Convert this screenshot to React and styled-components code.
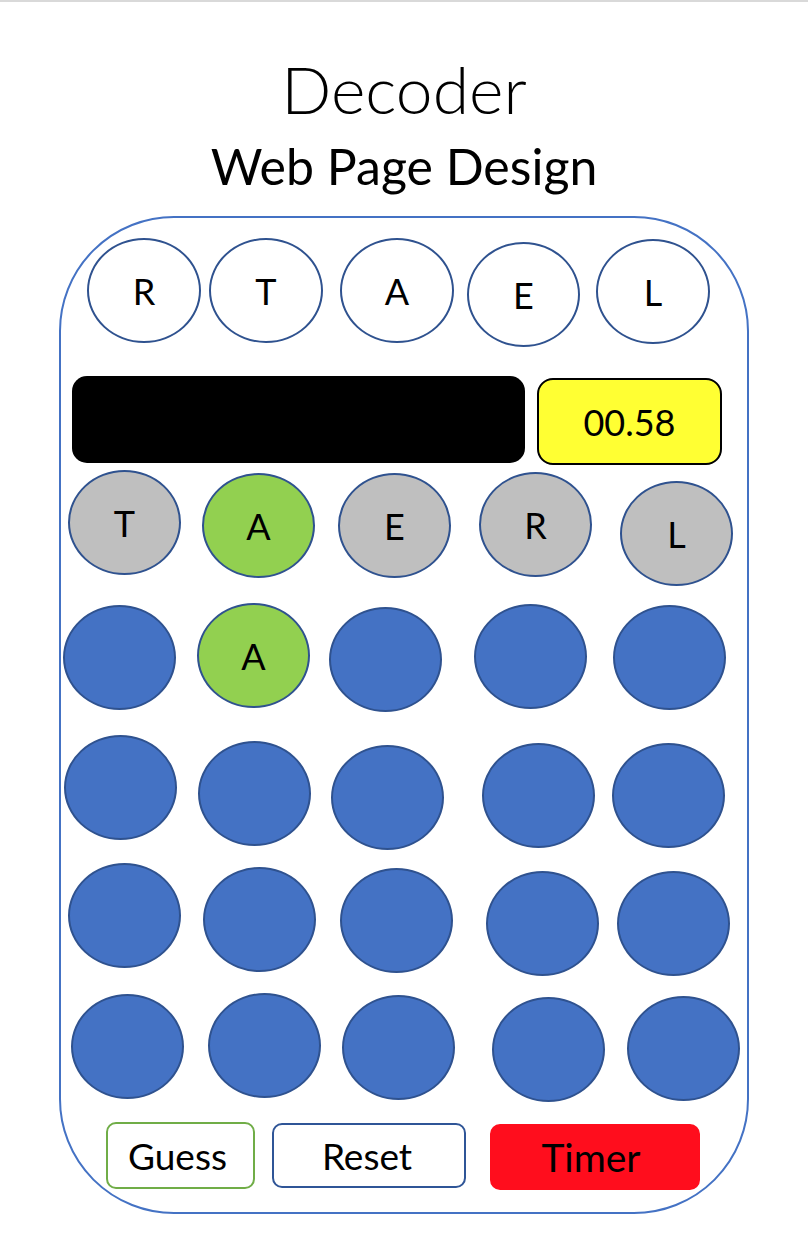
import styled, { createGlobalStyle } from "styled-components";

const GlobalStyle = createGlobalStyle`
  html, body {
    margin: 0;
    padding: 0;
    background: #ffffff;
  }
  body {
    border-top: 2px solid #d9d9d9;
    font-family: Lato, "Open Sans", sans-serif;
    color: #000;
  }
`;

const colors = {
  frame: "#4472c4",
  ring: "#2f528f",
  blank: "#ffffff",
  miss: "#bfbfbf",
  hit: "#92d050",
  slot: "#4472c4",
};

// letter pool, then the guess rows; ml / mt are the small gaps of the hand-drawn mockup
const pool = [
  { ch: "R", ml: 26, mt: 0, w: 114 },
  { ch: "T", ml: 8, mt: 0, w: 114 },
  { ch: "A", ml: 17, mt: 0, w: 114 },
  { ch: "E", ml: 13, mt: 4, w: 113 },
  { ch: "L", ml: 16, mt: 1, w: 114 },
];

const rows = [
  {
    mt: 7,
    cells: [
      { ch: "T", kind: "miss", ml: 7, mt: 0 },
      { ch: "A", kind: "hit", ml: 21, mt: 3 },
      { ch: "E", kind: "miss", ml: 23, mt: 3 },
      { ch: "R", kind: "miss", ml: 28, mt: 2 },
      { ch: "L", kind: "miss", ml: 28, mt: 11 },
    ],
  },
  {
    mt: 28,
    cells: [
      { kind: "slot", ml: 2, mt: 2 },
      { ch: "A", kind: "hit", ml: 21, mt: 0 },
      { kind: "slot", ml: 19, mt: 4 },
      { kind: "slot", ml: 32, mt: 1 },
      { kind: "slot", ml: 26, mt: 2 },
    ],
  },
  {
    mt: 27,
    cells: [
      { kind: "slot", ml: 3, mt: 0 },
      { kind: "slot", ml: 21, mt: 6 },
      { kind: "slot", ml: 20, mt: 10 },
      { kind: "slot", ml: 38, mt: 8 },
      { kind: "slot", ml: 17, mt: 8 },
    ],
  },
  {
    mt: 23,
    cells: [
      { kind: "slot", ml: 7, mt: 0 },
      { kind: "slot", ml: 22, mt: 4 },
      { kind: "slot", ml: 24, mt: 5 },
      { kind: "slot", ml: 33, mt: 8 },
      { kind: "slot", ml: 18, mt: 8 },
    ],
  },
  {
    mt: 25,
    cells: [
      { kind: "slot", ml: 10, mt: 1 },
      { kind: "slot", ml: 24, mt: 0 },
      { kind: "slot", ml: 21, mt: 2 },
      { kind: "slot", ml: 37, mt: 4 },
      { kind: "slot", ml: 22, mt: 3 },
    ],
  },
];

export default function App() {
  return (
    <>
      <GlobalStyle />
      <Page>
        <Title>Decoder</Title>
        <Subtitle>Web Page Design</Subtitle>
        <Board>
          <CircleRow $mt={20}>
            {pool.map((p, i) => (
              <Circle key={i} $kind="blank" $ml={p.ml} $mt={p.mt} $w={p.w}>
                {p.ch}
              </Circle>
            ))}
          </CircleRow>

          <DisplayRow>
            <WordBar />
            <Clock>00.58</Clock>
          </DisplayRow>

          {rows.map((r, ri) => (
            <CircleRow key={ri} $mt={r.mt}>
              {r.cells.map((c, ci) => (
                <Circle key={ci} $kind={c.kind} $ml={c.ml} $mt={c.mt} $w={113}>
                  {c.ch}
                </Circle>
              ))}
            </CircleRow>
          ))}

          <ButtonRow>
            <Button $border="#70ad47" $ml={45} $w={149} $h={67} $shift={-6}>
              Guess
            </Button>
            <Button $border="#2f5597" $ml={17} $mt={1} $w={194} $h={65} $shift={-4}>
              Reset
            </Button>
            <Button
              $fill="#ff0d1d"
              $border="#ff0d1d"
              $ml={24}
              $mt={2}
              $w={210}
              $h={66}
              $size={39}
              $shift={-8}
            >
              Timer
            </Button>
          </ButtonRow>
        </Board>
      </Page>
    </>
  );
}

const Page = styled.div`
  display: flex;
  flex-direction: column;
  align-items: center;
  padding-bottom: 30px;
`;

const Title = styled.h1`
  margin: 54px 0 0;
  font-family: Lato, "Open Sans", sans-serif;
  font-weight: 300;
  font-size: 66px;
  line-height: 1;
`;

const Subtitle = styled.h2`
  margin: 19px 0 0;
  font-family: Lato, "Open Sans", sans-serif;
  font-weight: 400;
  font-size: 50px;
  line-height: 1;
`;

const Board = styled.div`
  box-sizing: border-box;
  width: 690px;
  height: 998px;
  margin-top: 25px;
  border: 2px solid ${colors.frame};
  border-radius: 115px;
  display: flex;
  flex-direction: column;
`;

const CircleRow = styled.div`
  display: flex;
  align-items: flex-start;
  height: 105px;
  margin-top: ${(p) => p.$mt}px;
`;

const Circle = styled.div`
  box-sizing: border-box;
  flex: none;
  width: ${(p) => p.$w}px;
  height: 105px;
  margin-left: ${(p) => p.$ml}px;
  margin-top: ${(p) => p.$mt}px;
  border-radius: 50%;
  border: 2px solid ${colors.ring};
  background: ${(p) => colors[p.$kind]};
  display: flex;
  align-items: center;
  justify-content: center;
  font-size: 36px;
  line-height: 1;
`;

const DisplayRow = styled.div`
  display: flex;
  align-items: flex-start;
  height: 87px;
  margin-top: 33px;
`;

const WordBar = styled.div`
  width: 453px;
  height: 87px;
  margin-left: 11px;
  background: #000;
  border-radius: 15px;
`;

const Clock = styled.div`
  box-sizing: border-box;
  width: 185px;
  height: 87px;
  margin-left: 12px;
  margin-top: 2px;
  background: #ffff33;
  border: 2px solid #000;
  border-radius: 16px;
  display: flex;
  align-items: center;
  justify-content: center;
  font-size: 36px;
  line-height: 1;
`;

const ButtonRow = styled.div`
  display: flex;
  align-items: flex-start;
  margin-top: 24px;
`;

const Button = styled.button`
  box-sizing: border-box;
  flex: none;
  width: ${(p) => p.$w}px;
  height: ${(p) => p.$h}px;
  margin: ${(p) => p.$mt || 0}px 0 0 ${(p) => p.$ml}px;
  padding: 0 ${(p) => -(p.$shift || 0)}px 0 0;
  background: ${(p) => p.$fill || "#fff"};
  border: 2px solid ${(p) => p.$border};
  border-radius: 10px;
  font-family: Lato, "Open Sans", sans-serif;
  font-size: ${(p) => p.$size || 37}px;
  line-height: 1;
  color: #000;
  cursor: pointer;
`;
